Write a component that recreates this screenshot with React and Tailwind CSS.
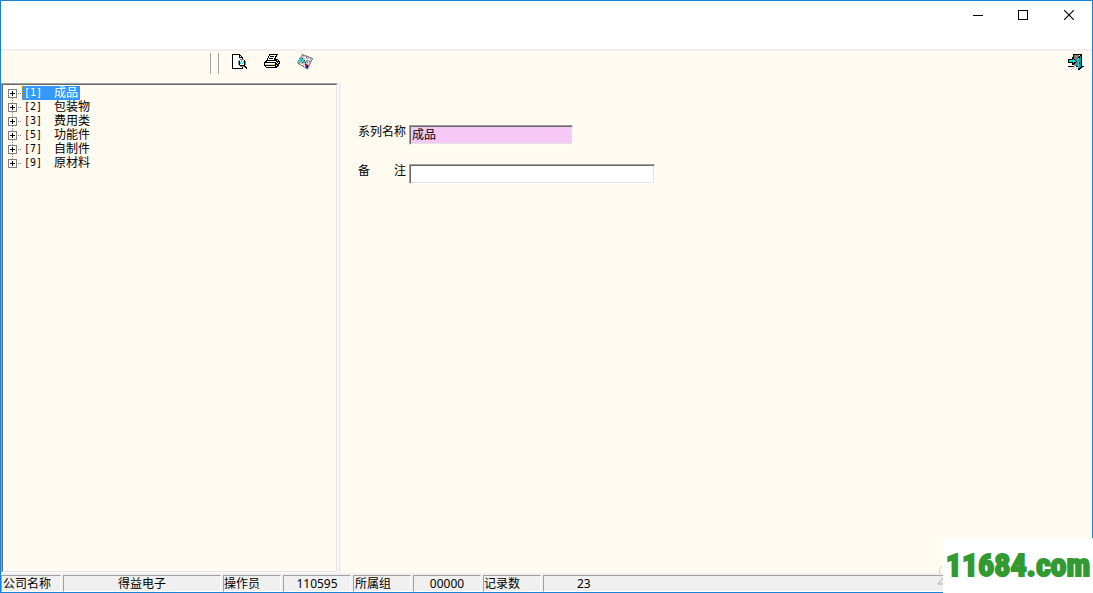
import React, { useState } from "react";

const NODES = [
  { id: "1", name: "成品" },
  { id: "2", name: "包装物" },
  { id: "3", name: "费用类" },
  { id: "5", name: "功能件" },
  { id: "7", name: "自制件" },
  { id: "9", name: "原材料" },
];

const STATUS = [
  { text: "公司名称", cls: "w-[60px] pl-px" },
  { text: "得益电子", cls: "w-[158px] text-center" },
  { text: "操作员", cls: "w-[58px]" },
  { text: "110595", cls: "w-[68px] text-center" },
  { text: "所属组", cls: "w-[58px] pl-px" },
  { text: "00000", cls: "w-[68px] text-center" },
  { text: "记录数", cls: "w-[58px]" },
];

function PreviewIcon() {
  return (
    <svg width="16" height="16" viewBox="-1 0 16 16" shapeRendering="crispEdges">
      <path d="M0 0h8v1h1v1h1v1h1v12H0z" fill="#000" />
      <path d="M1 1h6v3h3v10H1z" fill="#fff" />
      <path d="M8 2h1v1H8z" fill="#fff" />
      <path d="M8 5h4v1h1v1h1v4h-1v1h-1v1H8v-1H7v-1H6V7h1V6h1z" fill="#808080" />
      <path d="M7 7h1v4H7zM12 6h1v5h-1zM8 11h4v1H8z" fill="#000" />
      <path d="M8 6h4v5H8z" fill="#fff" />
      <path d="M9 6h1v2H9zM8 8h1v2H8zM10 9h1v1h-1zM11 7h1v2h-1z" fill="#00e5e5" />
      <path d="M12 11h1v1h1v1h1v2h-1v-1h-1v-1h-1z" fill="#000" />
    </svg>
  );
}

function PrinterIcon() {
  return (
    <svg width="16" height="15" viewBox="0 0 16 15" shapeRendering="crispEdges">
      <path d="M5 0h9v1h-1v2h-1v2h2v1h1v1h1v3h-1v2h-1v1h-1v1H2v-1H1v-1H0V8h1V7h1V6h1V4h1V2h1z" fill="#000" />
      <path d="M6 1h6v1h-1v2h-1v2H4V4h1V2h1z" fill="#fff" />
      <path d="M6 2h4v1H6zM5 4h4v1H5z" fill="#000" />
      <path d="M3 7h9v1H3zM13 6h1v1h-1zM1 9h10v1H1zM2 12h9v1H2zM12 8h1v1h-1z" fill="#fff" />
      <path d="M13 9h1v1h-1zM12 11h1v1h-1zM14 8h1v1h-1z" fill="#fff" />
      <path d="M1 10h10v1H1z" fill="#d8d8d8" />
      <path d="M7 10h3v1H7z" fill="#ffee00" />
    </svg>
  );
}

function EditIcon() {
  return (
    <svg width="16" height="16" viewBox="0 0 16 16">
      <path d="M5.500 .5l10 4-5 10.500-10-6z" fill="#c9c9c9" stroke="#444" strokeDasharray="2 .6" />
      <g shapeRendering="crispEdges">
        <path d="M7 3h2v1H7zM11 5h2v1h-2zM8 5h2v1H8zM4 10h2v1H4zM7 11h1v1H7zM11 9h1v1h-1z" fill="#fff" />
        <path d="M9 3h1v1H9zM10 6h1v1h-1zM12 7h1v1h-1zM10 8h1v1h-1zM9 7h1v1H9z" fill="#707070" />
        <path d="M2 4h3v1h1v1h1v1h1v1H6V7H5v1H3v1H1V8h2V6H2zM0 8h2v1H0zM6 8h2v1H6z" fill="#1cc8cc" />
        <path d="M5 4h1v1H5zM7 6h1v1H7zM5 8h1v1H5zM8 8h1v1H8z" fill="#222" />
        <path d="M8 10h2v2H8z" fill="#e00020" />
        <path d="M9 12h2v2H9zM10 11h1v1h-1z" fill="#1111cc" />
        <path d="M8 9h1v1H8z" fill="#e040c0" />
      </g>
    </svg>
  );
}

function ExitIcon() {
  return (
    <svg width="16" height="16" viewBox="0 0 16 16" shapeRendering="crispEdges">
      <path d="M1 13h15v3H1z" fill="#fff" />
      <path d="M2 13h1v1H2zM4 14h1v1H4zM6 13h1v1H6zM8 14h1v1H8zM3 15h1v1H3zM7 15h1v1H7zM14 13h1v1h-1zM13 14h1v1h-1z" fill="#bbb" />
      <path d="M6 1h5v11H6z" fill="#808080" />
      <path d="M5 0h9v1H5zM5 1h1v3H5zM0 12h6v1H0zM8 12h2v1H8zM14 12h2v1h-2z" fill="#000" />
      <path d="M13 1h1v13h-1v1h-1v1h-2V3h1V2h1V1z" fill="#000" />
      <path d="M12 2h1v11h-1v1h-1V4h1z" fill="#009a9a" />
      <path d="M10 4h1v10h-1z" fill="#00e0e0" />
      <path d="M11 8h1v2h-1z" fill="#000" />
      <path d="M4 3h1v1h1v1h1v1h1v1h1v1H8v1H7v1H6v1H4V9H0V5h4z" fill="#000" />
      <path d="M5 5h1v1h1v1h1v1H6v1H5V8H1V6h4z" fill="#00dede" />
    </svg>
  );
}

function ToolButton({ label, children }) {
  return (
    <button type="button" aria-label={label} className="flex h-4 w-4 items-start justify-center">
      {children}
    </button>
  );
}

function TitleBar() {
  return (
    <header className="flex h-[50px] justify-end border-b-2 border-[#f0f0f0] bg-white">
      <div className="flex h-7 items-center">
        <button type="button" aria-label="最小化" className="flex h-7 w-11 items-center justify-center">
          <svg width="10" height="10" viewBox="0 0 10 10" shapeRendering="crispEdges"><path d="M0 5h10v1H0z" fill="#000" /></svg>
        </button>
        <button type="button" aria-label="最大化" className="flex h-7 w-[46px] items-center justify-center">
          <svg width="10" height="10" viewBox="0 0 10 10" shapeRendering="crispEdges"><path d="M.5.5h9v9h-9z" fill="none" stroke="#000" /></svg>
        </button>
        <button type="button" aria-label="关闭" className="flex h-7 w-[46px] items-center justify-center">
          <svg width="10" height="10" viewBox="0 0 10 10"><path d="M0 0l10 10M10 0L0 10" fill="none" stroke="#000" strokeWidth="1.1" /></svg>
        </button>
      </div>
    </header>
  );
}

function Tree({ selected, onSelect }) {
  return (
    <ul className="pt-px pl-[5px] font-['Liberation_Sans','Noto_Sans_CJK_SC',sans-serif]">
      {NODES.map((n, i) => {
        const active = n.id === selected;
        return (
          <li key={n.id} className="flex h-3.5 items-center">
            <svg width="14" height="14" viewBox="0 0 14 14" shapeRendering="crispEdges" className="shrink-0">
              {i > 0 && <path d="M4.500 0v3" stroke="#808080" strokeDasharray="1 1" />}
              {i < NODES.length - 1 && <path d="M4.500 12v2" stroke="#808080" strokeDasharray="1 1" />}
              <path d="M.5 3.500h8v8h-8z" fill="#fff" stroke="#808080" />
              <path d="M2 7h5v1H2zM4 5h1v5H4z" fill="#000" />
              <path d="M10 7.500h3" stroke="#808080" strokeDasharray="1 1" />
            </svg>
            <button
              type="button"
              onClick={() => onSelect(n.id)}
              className={
                "flex h-3.5 items-center border border-dotted px-px leading-3 whitespace-nowrap " +
                (active ? "border-[#e07000] bg-[#3399ff] text-white" : "border-transparent")
              }
            >
              <span className="w-[30px] text-left font-['DejaVu_Sans_Mono',monospace] text-[10px] leading-3">[{n.id}]</span>
              <span>{n.name}</span>
            </button>
          </li>
        );
      })}
    </ul>
  );
}

const SUNKEN =
  "border border-t-[#a0a0a0] border-l-[#a0a0a0] border-r-white border-b-white shadow-[inset_1px_1px_#696969,inset_-1px_-1px_#e3e3e3] pl-0.5";

const CELL =
  "h-[17px] shrink-0 border border-t-[#a0a0a0] border-l-[#a0a0a0] border-r-white border-b-white leading-4 whitespace-nowrap";

export default function App() {
  const [selected, setSelected] = useState("1");
  const [note, setNote] = useState("");
  const current = NODES.find((n) => n.id === selected);

  return (
    <div className="relative flex min-h-screen flex-col border border-[#1883d7] bg-[#fffbf0] font-['Noto_Sans','Noto_Sans_CJK_SC',sans-serif] text-xs text-black">
      <TitleBar />

      <div className="flex h-8 items-start justify-between pr-2 pl-[209px]">
        <div className="flex items-start">
          <div className="mt-0.5 mr-3 h-[21px] w-[9px] border-x border-[#a0a0a0]" />
          <div className="flex gap-[17px] pt-[3px]">
            <ToolButton label="预览"><PreviewIcon /></ToolButton>
            <ToolButton label="打印"><PrinterIcon /></ToolButton>
            <ToolButton label="编辑"><EditIcon /></ToolButton>
          </div>
        </div>
        <div className="pt-[3px]">
          <ToolButton label="退出"><ExitIcon /></ToolButton>
        </div>
      </div>

      <main className="flex flex-1">
        <nav aria-label="系列" className="w-[337px] shrink-0 border border-t-[#a0a0a0] border-r-white border-b-white border-l-[#a0a0a0]">
          <div className="h-full border border-t-[#696969] border-r-[#e3e3e3] border-b-[#e3e3e3] border-l-[#696969]">
            <Tree selected={selected} onSelect={setSelected} />
          </div>
        </nav>
        <div className="w-[3px] shrink-0 bg-[#f0f0f0]" />
        <form className="flex flex-1 flex-col gap-[19px] pt-[42px] pl-[17px]">
          <div className="flex items-start">
            <label htmlFor="series" className="w-[51px] leading-3.5">系列名称</label>
            <input id="series" readOnly value={current.name} className={"h-5 w-[164px] bg-[#f5c8f5] pb-0.5 leading-3.5 outline-none " + SUNKEN} />
          </div>
          <div className="flex items-start">
            <label htmlFor="note" className="w-[51px] leading-3.5">备　　注</label>
            <input id="note" value={note} onChange={(e) => setNote(e.target.value)} className={"h-5 w-[246px] bg-white leading-3.5 outline-none " + SUNKEN} />
          </div>
        </form>
      </main>

      <footer className="flex gap-0.5 bg-[#f0f0f0] pt-0.5">
        {STATUS.map((s) => (
          <div key={s.text} className={CELL + " " + s.cls}>{s.text}</div>
        ))}
        <div className={CELL + " min-w-0 flex-1 shrink pl-[33px]"}>23</div>
      </footer>

      <div className="absolute -right-px -bottom-px">
        <svg width="5" height="34" viewBox="0 0 5 34" className="absolute -left-[5px] bottom-0">
          <path d="M4 7C1 9 .5 14 3 18" fill="none" stroke="#ccc" />
          <path d="M5 19L0 25h5" fill="none" stroke="#aaa" />
        </svg>
        <div className="flex h-[55px] w-[150px] items-center justify-center bg-white pb-0.5 font-['Roboto_Condensed',Roboto,sans-serif] text-[32px] leading-none font-bold text-[#339933] [-webkit-text-stroke:2px_#339933]">
          11684.com
        </div>
      </div>
    </div>
  );
}
